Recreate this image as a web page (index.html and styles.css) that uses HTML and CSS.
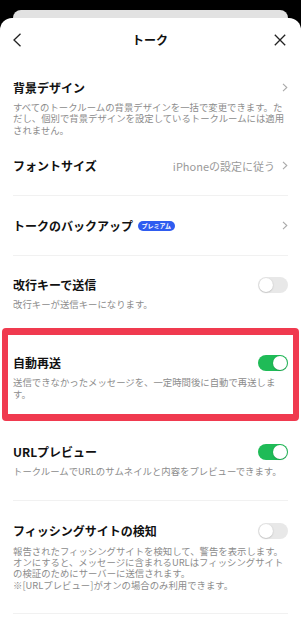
FILE: index.html
```html
<!DOCTYPE html>
<html lang="ja">
<head>
<meta charset="utf-8">
<link rel="stylesheet" href="styles.css">
</head>
<body>
<div class="backcard"></div>
<div class="sheet">
  <header class="header">
    <svg class="hicon" width="10" height="14" viewBox="0 0 10 14"><path d="M8.5 0.8 L2 7 L8.5 13.2" fill="none" stroke="#222" stroke-width="1.3"/></svg>
    <div class="htitle">トーク</div>
    <svg class="hicon close" width="12" height="12" viewBox="0 0 12 12"><path d="M0.8 0.8 L11.2 11.2 M11.2 0.8 L0.8 11.2" fill="none" stroke="#222" stroke-width="1.3"/></svg>
  </header>

  <div class="item i1">
    <div class="row">
      <span class="title">背景デザイン</span>
      <svg class="chev" width="6" height="9" viewBox="0 0 6 9"><path d="M1 0.8 L4.8 4.5 L1 8.2" fill="none" stroke="#aaa" stroke-width="1.1"/></svg>
    </div>
    <p class="desc">すべてのトークルームの背景デザインを一括で変更できます。た<br>だし、個別で背景デザインを設定しているトークルームには適用<br>されません。</p>
  </div>

  <div class="item i2 divided">
    <div class="row">
      <span class="title">フォントサイズ</span>
      <span class="value">iPhoneの設定に従う
        <svg class="chev" width="6" height="9" viewBox="0 0 6 9"><path d="M1 0.8 L4.8 4.5 L1 8.2" fill="none" stroke="#aaa" stroke-width="1.1"/></svg>
      </span>
    </div>
  </div>

  <div class="item i3 divided">
    <div class="row">
      <span class="title">トークのバックアップ<span class="badge">プレミアム</span></span>
      <svg class="chev" width="6" height="9" viewBox="0 0 6 9"><path d="M1 0.8 L4.8 4.5 L1 8.2" fill="none" stroke="#aaa" stroke-width="1.1"/></svg>
    </div>
  </div>

  <div class="item i4">
    <div class="row">
      <span class="title">改行キーで送信</span>
      <span class="toggle"></span>
    </div>
    <p class="desc">改行キーが送信キーになります。</p>
  </div>

  <div class="highlight">
    <div class="item i5">
      <div class="row">
        <span class="title">自動再送</span>
        <span class="toggle on"></span>
      </div>
      <p class="desc">送信できなかったメッセージを、一定時間後に自動で再送しま<br>す。</p>
    </div>
  </div>

  <div class="item i6 divided">
    <div class="row">
      <span class="title">URLプレビュー</span>
      <span class="toggle on"></span>
    </div>
    <p class="desc">トークルームでURLのサムネイルと内容をプレビューできます。</p>
  </div>

  <div class="item i7 divided">
    <div class="row">
      <span class="title">フィッシングサイトの検知</span>
      <span class="toggle"></span>
    </div>
    <p class="desc">報告されたフィッシングサイトを検知して、警告を表示します。<br>オンにすると、メッセージに含まれるURLはフィッシングサイト<br>の検証のためにサーバーに送信されます。<br>※[URLプレビュー]がオンの場合のみ利用できます。</p>
  </div>
</div>
</body>
</html>
```

FILE: styles.css
```css
html, body {
  margin: 0;
  padding: 0;
  background: #000;
}
body {
  font-family: "Noto Sans CJK JP", "Noto Sans", sans-serif;
  color: #111;
  width: 301px;
  overflow: hidden;
}
.backcard {
  margin: 10px 13px 0;
  height: 8px;
  background: #e2e2e2;
  border-radius: 8px 8px 0 0;
}
.sheet {
  background: #fff;
  border-radius: 12px 12px 0 0;
  min-height: 607px;
}
.header {
  height: 44px;
  display: flex;
  align-items: center;
  justify-content: space-between;
  padding: 0 15px 0 12px;
}
.hicon { display: block; }
.htitle {
  font-size: 12px;
  font-weight: 700;
  line-height: 18px;
  margin-left: 4px;
}
.item {
  padding: 20px 13px 20px;
}
.divided {
  position: relative;
}
.item.divided::after {
  content: "";
  display: block;
  height: 1px;
  background: #f1f1f1;
}
.row {
  display: flex;
  align-items: center;
  justify-content: space-between;
  height: 18px;
}
.title {
  font-size: 12px;
  font-weight: 700;
  line-height: 18px;
  white-space: nowrap;
  display: flex;
  align-items: center;
}
.chev { display: block; flex: none; margin-right: 0; }
.value {
  font-size: 11px;
  color: #9a9a9a;
  display: flex;
  align-items: center;
  gap: 7px;
  white-space: nowrap;
}
.badge {
  display: inline-block;
  margin-left: 5px;
  background: #2f5cf0;
  color: #fff;
  font-size: 6px;
  font-weight: 700;
  line-height: 10px;
  height: 10px;
  padding: 0 3.5px;
  border-radius: 5px;
}
.desc {
  margin: 5.5px 0 0;
  font-size: 9.4px;
  line-height: 11.3px;
  color: #8c8c8c;
  white-space: nowrap;
}
.toggle {
  flex: none;
  width: 30px;
  height: 16px;
  border-radius: 8px;
  background: #e8e8e8;
  position: relative;
}
.toggle::after {
  content: "";
  position: absolute;
  top: 1px;
  left: 1px;
  width: 14px;
  height: 14px;
  border-radius: 50%;
  background: #fff;
  box-shadow: 0 0.5px 1.5px rgba(0,0,0,0.25);
}
.toggle.on { background: #1fbb57; }
.toggle.on::after { left: 15px; }

.i1 { padding-top: 16.5px; padding-bottom: 0; }
.i2 { padding-top: 21px; padding-bottom: 0; }
.i2::after, .i3::after, .i6::after, .i7::after { margin-top: 20px; }
.i3 { padding-top: 21px; padding-bottom: 0; }
.i4 { padding-top: 20px; padding-bottom: 17.4px; }
.i4 .desc { margin-top: 5.3px; }
.highlight {
  margin: 0 2px;
  border: 6px solid #f03a4f;
  border-top-width: 7px;
  border-bottom-width: 7px;
  border-radius: 4px;
}
.i5 { padding: 19px 5px 13.8px; }
.i5 .desc { margin-top: 5.6px; }
.i6 { padding-top: 22px; padding-bottom: 0; }
.i6::after { margin-top: 22.2px; }
.i7 { padding-top: 21px; padding-bottom: 0; }
.i7 .desc { margin-top: 6px; }
.i7::after { margin-top: 21.5px; }
```
